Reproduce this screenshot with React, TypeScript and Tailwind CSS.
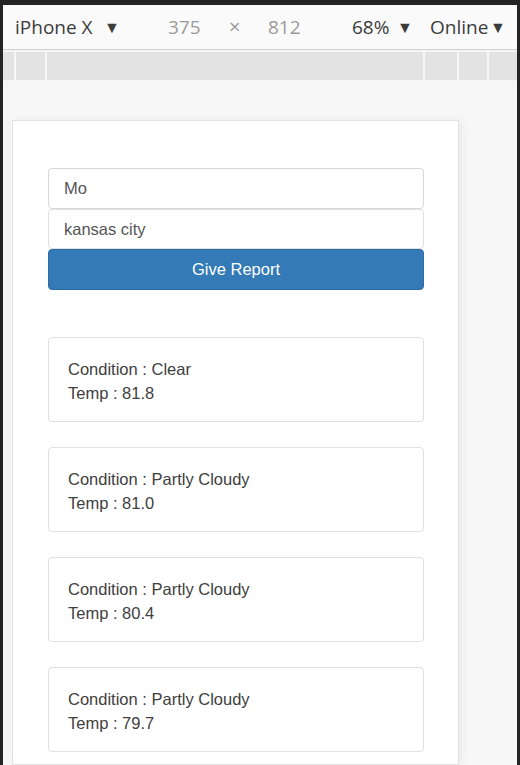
import React from "react";

const reports = [
  { c: "Clear", t: "81.8" },
  { c: "Partly Cloudy", t: "81.0" },
  { c: "Partly Cloudy", t: "80.4" },
  { c: "Partly Cloudy", t: "79.7" },
];

export default function App() {
  return (
    <div className="w-[520px] h-[765px] overflow-hidden bg-[#242424] pt-[5px] pl-[3px] pr-[3px] flex flex-col">
      <div className="flex-1 flex flex-col bg-[#f5f5f5] overflow-hidden">
        {/* toolbar */}
        <div
          className="h-[45px] shrink-0 bg-[#fafafa] border-b border-[#cfcfcf] flex items-center text-[19px] text-[#3c3c3c] whitespace-nowrap"
          style={{ fontFamily: '"Open Sans", "Noto Sans", sans-serif' }}
        >
          <span className="ml-[12px] w-[89px] shrink-0">iPhone X</span>
          <span className="w-[64px] shrink-0 text-[16px]">▼</span>
          <span className="w-[61px] shrink-0 text-[#9a9a9a]">375</span>
          <span className="w-[39px] shrink-0 text-[#9a9a9a] text-[20px]">×</span>
          <span className="w-[84px] shrink-0 text-[#9a9a9a]">812</span>
          <span className="w-[45px] shrink-0">68%</span>
          <span className="w-[33px] shrink-0 text-[16px]">▼</span>
          <span className="w-[60px] shrink-0">Online</span>
          <span className="text-[16px]">▼</span>
        </div>
        {/* ruler */}
        <div className="h-[32px] shrink-0 bg-[#e3e3e3] border-y-[2px] border-[#f5f5f5] flex">
          <div className="w-[13px] border-r-[2px] border-[#f7f7f7]" />
          <div className="w-[31px] border-r-[2px] border-[#f7f7f7]" />
          <div className="w-[378px] border-r-[2px] border-[#f7f7f7]" />
          <div className="w-[34px] border-r-[2px] border-[#f7f7f7]" />
          <div className="w-[30px] border-r-[2px] border-[#f7f7f7]" />
          <div className="flex-1" />
        </div>
        {/* page */}
        <div className="flex-1 flex pt-[38px] pl-[9px] bg-[#f7f7f7]">
          <div
            className="w-[447px] bg-white border border-[#e2e2e2] shadow-[3px_0_8px_rgba(0,0,0,0.06)] pt-[47px] pl-[35px] flex flex-col"
            style={{ fontFamily: '"Liberation Sans", Arial, sans-serif' }}
          >
            <div className="w-[376px] flex flex-col">
              <div className="h-[41px] border border-[#d8d8d8] rounded-[4px] flex items-center pl-[15px] text-[16.5px] text-[#555]">
                Mo
              </div>
              <div className="h-[40px] border border-[#e0e0e0] rounded-[4px] flex items-center pl-[15px] text-[16.5px] text-[#555]">
                kansas city
              </div>
              <div className="h-[41px] bg-[#337ab7] border border-[#2e6da4] rounded-[4px] flex items-center justify-center text-[16.5px] text-white">
                Give Report
              </div>
            </div>
            <div className="mt-[47px] w-[376px] flex flex-col gap-[25px]">
              {reports.map((r, i) => (
                <div
                  key={i}
                  className="h-[85px] border border-[#e0e0e0] rounded-[4px] pl-[19px] pt-[19px] text-[16.5px] leading-[24px] text-[#404040]"
                >
                  <div>Condition : {r.c}</div>
                  <div>Temp : {r.t}</div>
                </div>
              ))}
            </div>
          </div>
        </div>
      </div>
    </div>
  );
}
